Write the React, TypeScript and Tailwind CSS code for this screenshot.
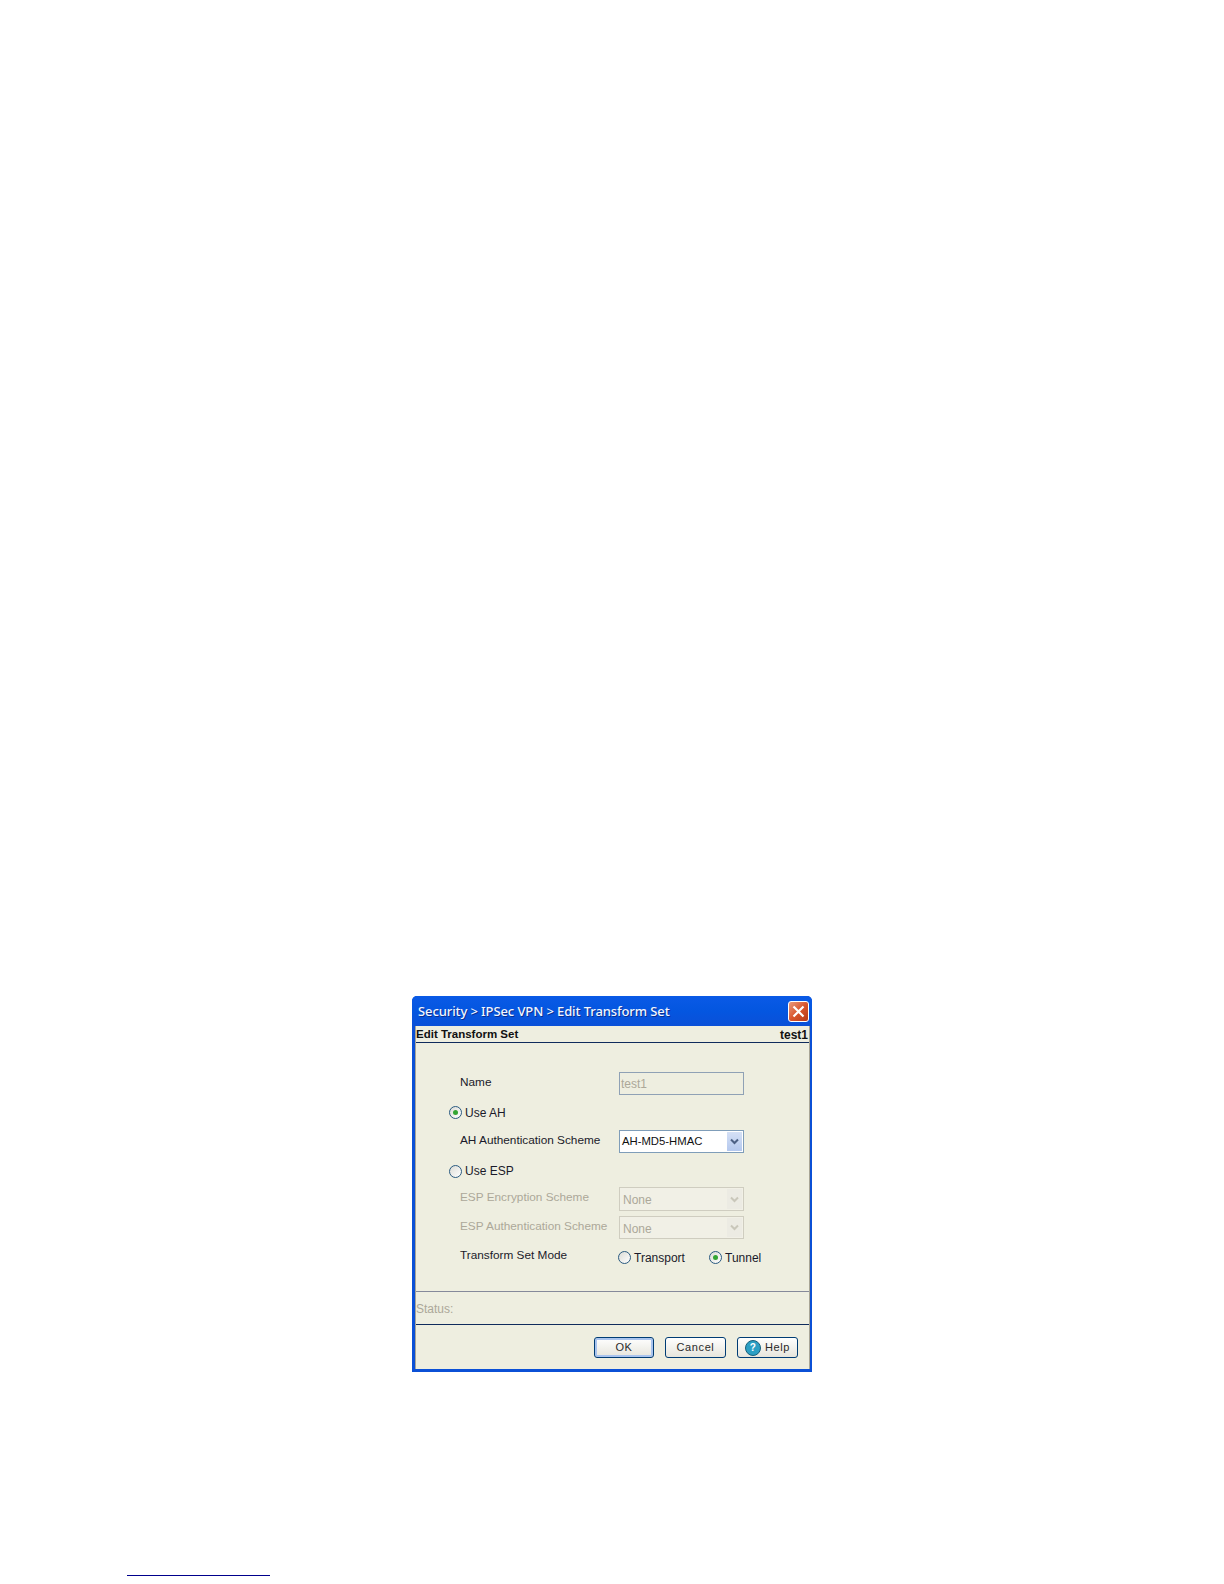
import type { ReactNode } from 'react';

const font = "font-['Liberation_Sans',Arial,sans-serif]";

function Radio({ checked }: { checked?: boolean }) {
  return (
    <span className="flex h-[13px] w-[13px] shrink-0 items-center justify-center rounded-full border border-[#2a5a80] bg-gradient-to-br from-[#dcdcd6] to-white">
      {checked && <span className="h-[5px] w-[5px] rounded-full bg-[#33a533]" />}
    </span>
  );
}

function Label({ children, disabled }: { children: ReactNode; disabled?: boolean }) {
  return (
    <span className={`w-[159px] shrink-0 pb-[2px] text-[11.8px] ${disabled ? 'text-[#aca899]' : 'text-[#1a1a2a]'}`}>
      {children}
    </span>
  );
}

function Combo({ value, disabled }: { value: string; disabled?: boolean }) {
  return (
    <div
      className={`flex h-full w-[125px] items-center justify-between border p-px ${
        disabled ? 'border-[#cfcdc0] bg-[#f1f0e6]' : 'border-[#7f9db9] bg-white'
      }`}
    >
      <span className={disabled ? 'pl-[2px] pt-[2px] text-xs text-[#aca899]' : 'pl-px text-[11.3px] text-[#111]'}>
        {value}
      </span>
      <span
        className={`flex h-full w-[15px] items-center justify-center ${
          disabled ? 'bg-[#ecebe3]' : 'bg-gradient-to-b from-[#d5e0f5] to-[#b4c8ee]'
        }`}
      >
        <svg width="9" height="7" viewBox="0 0 9 7" fill="none">
          <path d="M1 1.5 4.5 5 8 1.5" stroke={disabled ? '#c9c7ba' : '#4d6185'} strokeWidth="2" />
        </svg>
      </span>
    </div>
  );
}

function Button({ children, focused }: { children: ReactNode; focused?: boolean }) {
  return (
    <button
      className={`flex h-[21px] items-center justify-center gap-[4px] rounded-[3px] border border-[#003c74] bg-gradient-to-b from-white to-[#e6e5dc] text-[11px] tracking-[0.6px] text-[#2a2a2a] ${
        focused ? 'w-[60px] shadow-[inset_0_0_0_2px_#a9c4ee]' : 'w-[61px]'
      }`}
    >
      {children}
    </button>
  );
}

export default function App() {
  return (
    <div className={`flex min-h-[1584px] flex-col bg-white pl-[127px] ${font}`}>
      <div className="ml-[285px] mt-[996px] w-[400px] rounded-t-[5px] bg-[#0b50d6] pb-[3px] pl-[3px] pr-[2px]">
        <div className="-ml-[3px] -mr-[2px] flex h-[30px] items-center justify-between rounded-t-[5px] bg-gradient-to-b from-[#0a5ae6] via-[#0456e0] to-[#0a50d8] pl-[6px] pr-[3px]">
          <span className="pt-[2px] font-['Noto_Sans',sans-serif] text-[13px] font-medium tracking-[-0.1px] text-[#f2f6ff] [text-shadow:1px_1px_0_#0a2f90]">
            Security &gt; IPSec VPN &gt; Edit Transform Set
          </span>
          <span className="flex h-[21px] w-[21px] items-center justify-center rounded-[3px] border border-white bg-gradient-to-br from-[#e89a7c] via-[#d9552c] to-[#b53a18]">
            <svg width="13" height="13" viewBox="0 0 13 13" fill="none">
              <path d="M1.5 1.5 11.5 11.5M11.5 1.5 1.5 11.5" stroke="#fff" strokeWidth="2.2" />
            </svg>
          </span>
        </div>

        <div className="flex flex-col border-x border-[#a8a596] bg-[#eeeee0]">
          <div className="flex h-[17px] items-center justify-between border-b border-[#0f2b5c] font-bold text-[#111]">
            <span className="pt-[2px] text-[11.5px]">Edit Transform Set</span>
            <span className="pr-px pt-px text-xs">test1</span>
          </div>

          <div className="flex h-[248px] flex-col">
            <div className="ml-[44px] mt-[29px] flex h-[23px] items-center">
              <Label>Name</Label>
              <div className="flex h-full w-[125px] items-center border border-[#8fa1b5] pl-px text-xs text-[#aca899]">
                test1
              </div>
            </div>
            <div className="ml-[33px] mt-[9px] flex h-4 items-center gap-[3px] text-xs text-[#1a1a2a]">
              <Radio checked />
              <span className="pt-px">Use AH</span>
            </div>
            <div className="ml-[44px] mt-[10px] flex h-[23px] items-center">
              <Label>AH Authentication Scheme</Label>
              <Combo value="AH-MD5-HMAC" />
            </div>
            <div className="ml-[33px] mt-[10px] flex h-4 items-center gap-[3px] text-xs text-[#1a1a2a]">
              <Radio />
              Use ESP
            </div>
            <div className="ml-[44px] mt-2 flex h-6 items-center">
              <Label disabled>ESP Encryption Scheme</Label>
              <Combo value="None" disabled />
            </div>
            <div className="ml-[44px] mt-[5px] flex h-[23px] items-center">
              <Label disabled>ESP Authentication Scheme</Label>
              <Combo value="None" disabled />
            </div>
            <div className="ml-[44px] mt-[10px] flex h-4 items-center">
              <Label>Transform Set Mode</Label>
              <div className="-ml-px flex items-center gap-[3px] text-xs text-[#1a1a2a]">
                <Radio />
                <span className="w-[72px] pt-px">Transport</span>
                <Radio checked />
                <span className="pt-px">Tunnel</span>
              </div>
            </div>
          </div>

          <div className="flex h-[33px] items-center border-t border-[#85899a] text-xs text-[#aca899]">
            <span className="pt-px">Status:</span>
          </div>

          <div className="flex h-[45px] items-start justify-end gap-[11px] border-t border-[#0f2b5c] pr-[11px] pt-[12px]">
            <Button focused>OK</Button>
            <Button>Cancel</Button>
            <Button>
              <span className="flex h-4 w-4 items-center justify-center rounded-full border border-[#17607c] bg-[#2b9fc4] text-[10px] font-bold leading-none text-white">
                ?
              </span>
              Help
            </Button>
          </div>
        </div>
      </div>

      <div className="mt-[203px] h-px w-[143px] bg-[#00008c]" />
    </div>
  );
}
